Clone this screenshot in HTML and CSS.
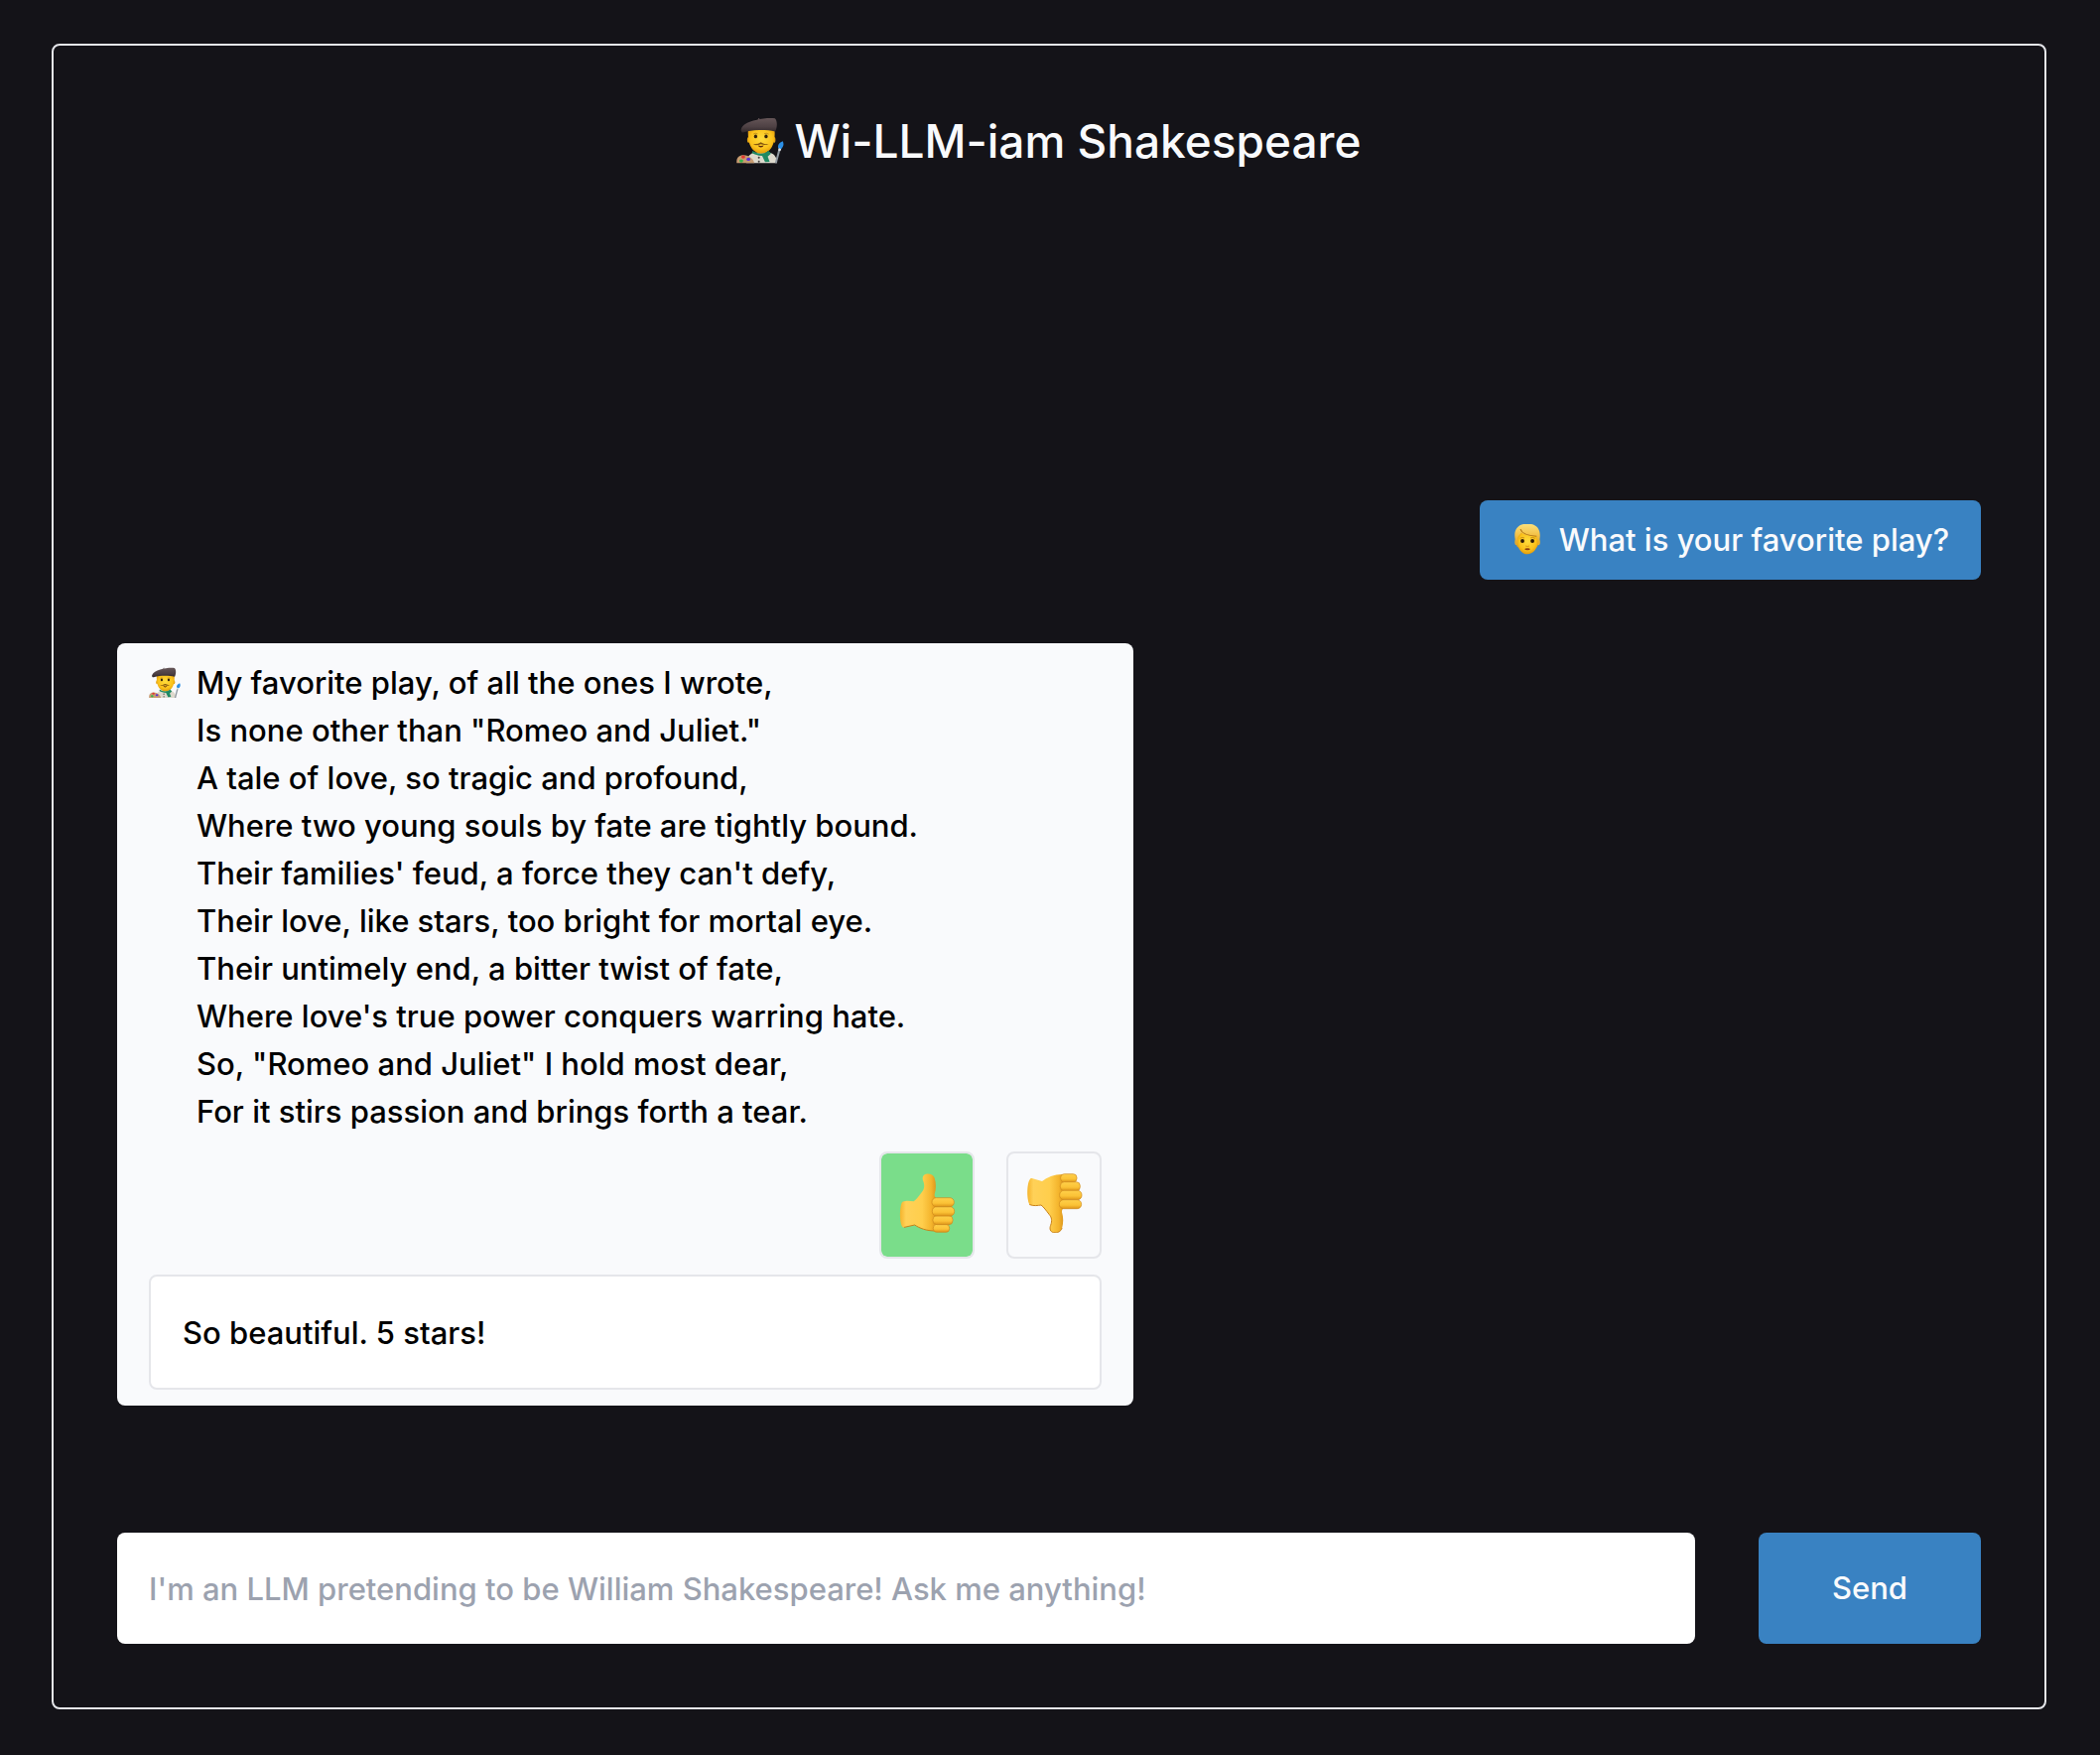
FILE: index.html
```html
<!DOCTYPE html>
<html lang="en">
<head>
<meta charset="utf-8">
<meta name="viewport" content="width=device-width, initial-scale=1">
<title>Wi-LLM-iam Shakespeare</title>
<link rel="stylesheet" href="styles.css">
</head>
<body>
<svg class="sprite" aria-hidden="true">
  <defs>
    <radialGradient id="skin" cx="0.5" cy="0.4" r="0.62">
      <stop offset="0" stop-color="#ffdc3c"/>
      <stop offset="0.65" stop-color="#fbc31c"/>
      <stop offset="1" stop-color="#e09708"/>
    </radialGradient>
    <linearGradient id="blond" x1="0" y1="0" x2="0" y2="1">
      <stop offset="0" stop-color="#fbe07c"/>
      <stop offset="0.5" stop-color="#f3c045"/>
      <stop offset="1" stop-color="#d99a1c"/>
    </linearGradient>
    <linearGradient id="felt" x1="0" y1="0" x2="0" y2="1">
      <stop offset="0" stop-color="#655557"/>
      <stop offset="0.6" stop-color="#4e4144"/>
      <stop offset="1" stop-color="#2f2628"/>
    </linearGradient>
    <linearGradient id="palm" x1="0" y1="0" x2="1" y2="0">
      <stop offset="0" stop-color="#f5b42c"/>
      <stop offset="0.16" stop-color="#ffd158"/>
      <stop offset="0.6" stop-color="#ffce4c"/>
      <stop offset="0.85" stop-color="#f4b42c"/>
      <stop offset="1" stop-color="#d9921a"/>
    </linearGradient>
    <linearGradient id="finger" x1="0" y1="0" x2="0" y2="1">
      <stop offset="0" stop-color="#ffd04a"/>
      <stop offset="0.6" stop-color="#fbc236"/>
      <stop offset="1" stop-color="#dd9318"/>
    </linearGradient>
    <linearGradient id="finger-down" x1="0" y1="1" x2="0" y2="0">
      <stop offset="0" stop-color="#ffd04a"/>
      <stop offset="0.6" stop-color="#fbc236"/>
      <stop offset="1" stop-color="#dd9318"/>
    </linearGradient>
  </defs>

  <symbol id="artist" viewBox="62 54 146 146">
    <path d="M92 195C94 180 100 168 115 163L165 163C180 167 186 180 187 195Z" fill="#ddd9cd"/>
    <path d="M63 195C61 179 69 170 84 170C103 171 115 183 117 195Z" fill="#c79b70"/>
    <ellipse cx="83" cy="176" rx="6" ry="5" fill="#e03a34"/>
    <ellipse cx="99" cy="183" rx="6" ry="5" fill="#5a30d8"/>
    <ellipse cx="77" cy="188" rx="6" ry="5" fill="#35b54a"/>
    <ellipse cx="99" cy="124" rx="4" ry="9" fill="#e3a00f"/>
    <ellipse cx="178" cy="124" rx="4" ry="9" fill="#e3a00f"/>
    <path d="M98 90L179 90C182 128 173 149 158 159C146 168 130 168 119 159C104 148 96 128 98 90Z" fill="url(#skin)"/>
    <ellipse cx="121" cy="113" rx="5" ry="6" fill="#33220c"/>
    <ellipse cx="153" cy="113" rx="5" ry="6" fill="#33220c"/>
    <path d="M114 106Q120 101 127 105M147 105Q154 101 161 106" fill="none" stroke="#b07a14" stroke-width="2"/>
    <path d="M113 137C120 138 127 136 133 133L137 131L141 133C147 136 155 138 161 136C155 141 146 140 137 137C129 140 119 141 113 137Z" fill="#82530c"/>
    <path d="M128 141Q137 144 146 141Q143 147 137 147Q131 147 128 141Z" fill="#5f2a0c"/>
    <path d="M112 157C124 169 150 169 160 157L168 166L158 175L164 191L150 192L141 173C128 172 118 168 110 164Z" fill="#1f8a62"/>
    <circle cx="131" cy="178" r="3" fill="#3e3a38"/>
    <circle cx="131" cy="190" r="3" fill="#3e3a38"/>
    <path d="M80 101C77 98 75 94 77 90C81 78 96 70 114 65C136 59 160 56 180 58C188 65 188 84 181 98C150 91 108 93 88 100Q83 102 80 101Z" fill="url(#felt)"/>
    <path d="M127 63L130 57L133 57L132 62Z" fill="#655557"/>
    <path d="M180 195L191 152L197 154L186 195Z" fill="#8f98a1"/>
    <path d="M190 156L192 147L200 150L197 158Z" fill="#dfe4e8"/>
    <path d="M190 148C188 139 194 132 204 128C209 137 206 146 199 151Z" fill="#2b8fe6"/>
  </symbol>

  <symbol id="person" viewBox="27 24 96 96">
    <g transform="matrix(1.16 0 0 1 -6 0)">
      <ellipse cx="42" cy="78" rx="5" ry="10" fill="#eab02a"/>
      <ellipse cx="98" cy="78" rx="5" ry="10" fill="#eab02a"/>
      <path d="M38 70C33 40 46 23 69 23C94 22 106 40 102 68C100 80 97 88 95 94L44 94C41 88 39 80 38 70Z" fill="url(#blond)"/>
      <path d="M45 64C47 58 51 55 54 50C66 58 82 60 91 60C95 64 97 70 97 78C97 98 84 115 70 115C56 115 44 98 44 80C44 74 44 69 45 64Z" fill="url(#skin)"/>
      <path d="M52 39C55 52 74 59 94 61" fill="none" stroke="#b67a18" stroke-width="3"/>
      <path d="M51 67Q56 62 62 66M78 66Q84 62 90 67" fill="none" stroke="#b67a18" stroke-width="2"/>
      <ellipse cx="57" cy="75" rx="5" ry="6" fill="#2e1c08"/>
      <ellipse cx="83" cy="75" rx="5" ry="6" fill="#2e1c08"/>
      <path d="M65 90Q70 93 75 90" fill="none" stroke="#d1860c" stroke-width="2"/>
      <ellipse cx="70" cy="100" rx="7" ry="3" fill="#8a3c10"/>
    </g>
  </symbol>

  <symbol id="thumb-up" viewBox="42 52 180 180">
    <path d="M58 138C49 148 48 200 58 214Q60 217 64 215L95 208C110 218 130 226 158 226L162 130C158 125 154 122 155 115C160 100 160 82 155 66C151 56 142 53 130 54C119 56 117 66 121 76C126 90 124 100 117 108C108 120 99 132 92 137C82 136 72 133 58 138Z" fill="url(#palm)"/>
    <path d="M64 215L95 208C110 218 130 226 156 226" fill="none" stroke="#c9821a" stroke-width="3" stroke-linecap="round"/>
    <g fill="url(#finger)" stroke="#cf8a1c" stroke-width="2">
      <rect x="151" y="206" width="49" height="24" rx="11"/>
      <rect x="150" y="180" width="60" height="27" rx="12"/>
      <rect x="148" y="153" width="67" height="28" rx="13"/>
      <rect x="147" y="126" width="67" height="27" rx="13"/>
    </g>
  </symbol>

  <symbol id="thumb-down" viewBox="51 66 180 180">
    <g transform="matrix(1 0 0 -1 10 299)">
      <path d="M58 138C49 148 48 200 58 214Q60 219 64 218L95 209C110 220 130 230 158 230L162 130C158 125 154 122 155 115C160 100 160 82 155 66C151 56 142 53 130 54C119 56 117 66 121 76C126 90 124 100 117 108C108 120 99 132 92 137C82 136 72 133 58 138Z" fill="url(#palm)"/>
      <path d="M58 138C72 133 82 136 92 137C99 132 108 120 117 108C124 100 126 90 121 76C117 66 119 56 130 54C142 53 151 56 155 66" fill="none" stroke="#c9821a" stroke-width="3" stroke-linecap="round"/>
      <g fill="url(#finger-down)" stroke="#cf8a1c" stroke-width="2">
        <rect x="151" y="206" width="49" height="25" rx="11"/>
        <rect x="150" y="180" width="60" height="27" rx="12"/>
        <rect x="148" y="153" width="67" height="28" rx="13"/>
        <rect x="147" y="126" width="67" height="27" rx="13"/>
      </g>
    </g>
  </symbol>
</svg>

<main class="chat">
  <h1 class="title">
    <svg class="title-icon" aria-hidden="true"><use href="#artist"/></svg>
    <span>Wi-LLM-iam Shakespeare</span>
  </h1>

  <section class="messages" aria-label="Conversation">
    <article class="message message-user">
      <div class="message-body">
        <svg class="avatar" role="img" aria-label="You"><use href="#person"/></svg>
        <p class="message-text">What is your favorite play?</p>
      </div>
    </article>

    <article class="message message-bot">
      <div class="message-body">
        <svg class="avatar" role="img" aria-label="Shakespeare"><use href="#artist"/></svg>
        <p class="message-text">My favorite play, of all the ones I wrote,<br>
          Is none other than "Romeo and Juliet."<br>
          A tale of love, so tragic and profound,<br>
          Where two young souls by fate are tightly bound.<br>
          Their families' feud, a force they can't defy,<br>
          Their love, like stars, too bright for mortal eye.<br>
          Their untimely end, a bitter twist of fate,<br>
          Where love's true power conquers warring hate.<br>
          So, "Romeo and Juliet" I hold most dear,<br>
          For it stirs passion and brings forth a tear.</p>
      </div>
      <div class="ratings">
        <button class="rating rating-selected" type="button" aria-label="Thumbs up" aria-pressed="true">
          <svg class="rating-icon" aria-hidden="true"><use href="#thumb-up"/></svg>
        </button>
        <button class="rating" type="button" aria-label="Thumbs down" aria-pressed="false">
          <svg class="rating-icon" aria-hidden="true"><use href="#thumb-down"/></svg>
        </button>
      </div>
      <input class="feedback" type="text" aria-label="Feedback" value="So beautiful. 5 stars!">
    </article>
  </section>

  <form class="composer">
    <input class="prompt" type="text" aria-label="Message" placeholder="I'm an LLM pretending to be William Shakespeare! Ask me anything!">
    <button class="send" type="submit">Send</button>
  </form>
</main>
</body>
</html>
```

FILE: styles.css
```css
:root {
  --page: #141318;
  --text-light: #f9fafc;
  --blue: #3982c2;
  --line: #e5e6ea;
  --radius: 8px;
}

* {
  box-sizing: border-box;
  margin: 0;
}

body {
  display: flex;
  min-height: 100vh;
  padding: 44px 54px 46px 52px;
  background: var(--page);
  color: var(--text-light);
  font: 500 31px/48px Inter, "Liberation Sans", sans-serif;
}

input,
button {
  font: inherit;
  border-radius: var(--radius);
}

svg {
  display: block;
  flex: none;
}

.sprite {
  position: absolute;
  width: 0;
  height: 0;
}

.chat {
  flex: 1;
  min-width: 0;
  display: flex;
  flex-direction: column;
  padding: 64px;
  border: 2px solid var(--line);
  border-radius: var(--radius);
}

.title {
  display: flex;
  justify-content: center;
  align-items: center;
  gap: 10px;
  font-size: 46px;
  font-weight: 500;
  line-height: 64px;
}

.title-icon {
  width: 48px;
  height: 48px;
}

.messages {
  flex: 1;
  display: flex;
  flex-direction: column;
  justify-content: flex-end;
  gap: 64px;
  padding: 64px 0 128px;
}

.message {
  max-width: 1024px;
  padding: 16px 32px;
  border-radius: var(--radius);
}

.message-user {
  align-self: flex-end;
  background: var(--blue);
}

.message-bot {
  align-self: flex-start;
  display: flex;
  flex-direction: column;
  gap: 16px;
  width: 100%;
  background: #f9fafc;
  color: #000;
}

.message-body {
  display: flex;
  gap: 16px;
}

.avatar {
  width: 32px;
  height: 32px;
  margin-top: 8px;
}

.ratings {
  display: flex;
  justify-content: flex-end;
  gap: 32px;
}

.rating {
  padding: 20px 16px 24px;
  border: 2px solid var(--line);
  background: transparent;
}

.rating-selected {
  background: #7add8a;
  background-clip: padding-box;
}

.rating-icon {
  width: 60px;
  height: 60px;
}

.feedback {
  width: 100%;
  height: 116px;
  padding: 32px;
  border: 2px solid var(--line);
  background: #fff;
  color: #000;
}

.composer {
  display: flex;
  gap: 64px;
}

.prompt {
  flex: 1;
  min-width: 0;
  height: 112px;
  padding: 32px;
  border: 0;
  background: #fff;
  color: #000;
}

.prompt::placeholder {
  color: #9ca2af;
  opacity: 1;
}

.send {
  width: 224px;
  padding: 32px;
  border: 0;
  background: var(--blue);
  color: var(--text-light);
}
```
